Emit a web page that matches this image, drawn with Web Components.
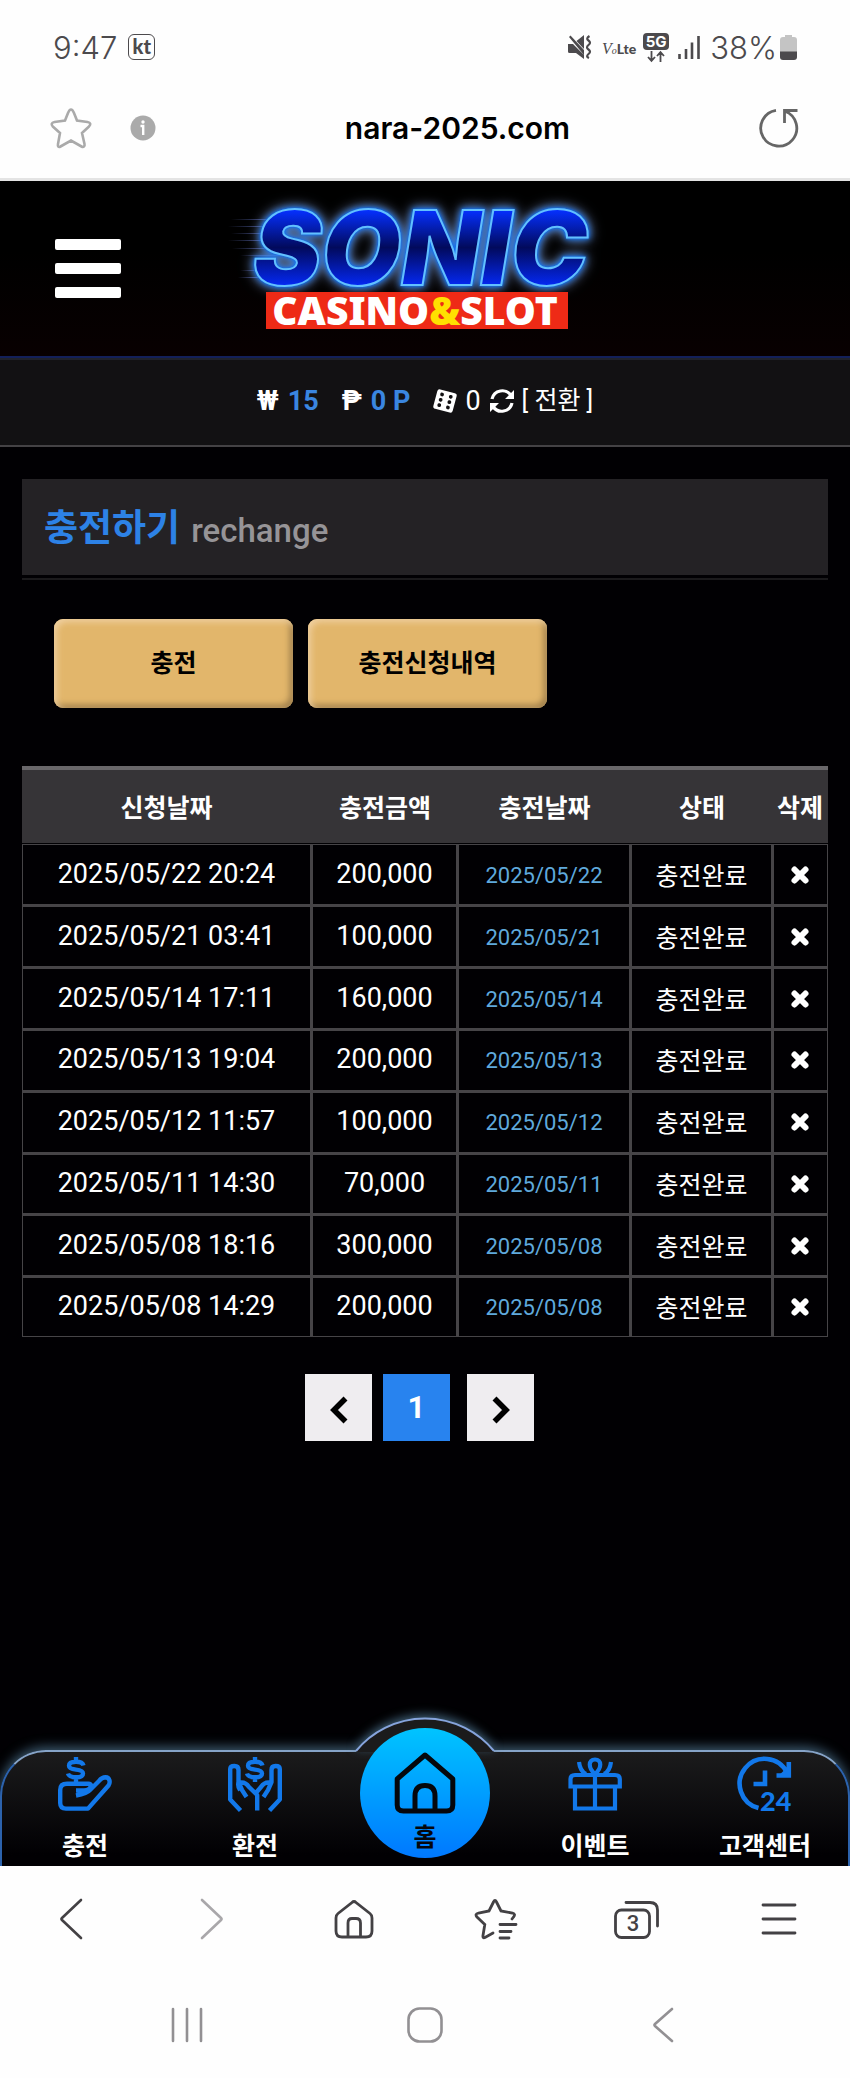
<!DOCTYPE html>
<html lang="ko">
<head>
<meta charset="utf-8">
<meta name="viewport" content="width=device-width, initial-scale=1">
<title>nara-2025.com</title>
<style>
    body {
        margin: 0;
        background: #fefefe;
        font-family: Roboto, "Noto Sans CJK KR", sans-serif;
    }
</style>
</head>
<body>
<phone-screen>
    <status-bar slot="top" time="9:47" battery="38%"></status-bar>
    <address-bar slot="top">nara-2025.com</address-bar>

    <site-header></site-header>
    <wallet-bar money="15" point="0 P" casino="0"></wallet-bar>
    <page-title sub="rechange">충전하기</page-title>
    <button-row>
        <gold-button>충전</gold-button>
        <gold-button>충전신청내역</gold-button>
    </button-row>
    <charge-table></charge-table>
    <page-nav current="1"></page-nav>

    <tab-nav slot="bottom"></tab-nav>
    <browser-toolbar slot="bottom" tabs="3"></browser-toolbar>
    <system-nav slot="bottom"></system-nav>
</phone-screen>

<script>
// ====================================================================
// ** Icons **
// ====================================================================
const ICONS = {
    star: ['0 0 42 42', `<path d="M21 2.500C22.500 2.500 23.200 4 24 6L27 13.500L37.500 15C40.500 15.500 41.200 17.500 39 19.500L32 26L34.500 37C35 39.500 33.500 40.500 31.500 39.500L21 33.500L10.500 39.500C8.500 40.500 7.500 39.500 8 37L10 26L2.800 19.500C.8 17.500 1.500 15.500 4.500 15L15 13.500L18 6C18.800 4 19.500 2.500 21 2.500Z" stroke="currentColor" stroke-width="2.600" fill="none"/>`],
    info: ['0 0 26 26', `<circle cx="13" cy="13" r="12.500" fill="currentColor"/><circle cx="13" cy="7" r="1.700" fill="#fff"/><path d="M10.500 11H13.200V20" stroke="#fff" stroke-width="2.400" fill="none"/>`],
    reload: ['0 0 40 40', `<path d="M17 2.300A18 18 0 1 0 26 3.200M38.500 2.500H25.500V15" stroke="currentColor" stroke-width="2.800" fill="none"/>`],
    mute: ['0 0 24 24', `<path d="M0 9H5L16 20V24L8 18H1.500Q0 18 0 16.500ZM8.500 6L16 0V14ZM1 2L2.500 .5L16 15V20Z" fill="currentColor"/><path d="M21.500 1Q17.500 3.500 20.500 5.500T20.500 10T20.500 14.500T20.500 19T21 23" stroke="currentColor" stroke-width="2.200" fill="none"/>`],
    arrows: ['0 0 18 11', `<path d="M4.500 0V9M1 6L4.500 9.800L8 6M13.500 11V2M10 5L13.500 1.200L17 5" stroke="currentColor" stroke-width="1.800" fill="none"/>`],
    signal: ['0 0 22 24', `<path d="M1.500 19V24M8 14V24M14 7.500V24M20.500 1V24" stroke="currentColor" stroke-width="2.600"/>`],
    battery: ['0 0 17 25', `<path d="M5 0H12V2H14Q17 2 17 5V17H0V5Q0 2 3 2H5Z" fill="#c4c4c4"/><path d="M0 16.500H17V22Q17 25 14 25H3Q0 25 0 22Z" fill="#4c4a4d"/>`],
    bars: ['0 0 66 60', `<g fill="#fff"><rect width="66" height="11" rx="2"/><rect y="24" width="66" height="11" rx="2"/><rect y="48" width="66" height="11" rx="2"/></g>`],
    dice: ['0 0 24 24', `<g transform="rotate(15 12 12)"><rect x="2" y="2" width="20" height="20" rx="2.500" fill="#fff"/><g fill="#121113"><circle cx="7.500" cy="6.500" r="1.900"/><circle cx="7.500" cy="12" r="1.900"/><circle cx="7.500" cy="17.500" r="1.900"/><circle cx="16.500" cy="6.500" r="1.900"/><circle cx="16.500" cy="12" r="1.900"/><circle cx="16.500" cy="17.500" r="1.900"/></g></g>`],
    sync: ['0 0 26 26', `<path d="M3 11A10.500 10.500 0 0 1 22 7.500M23 15A10.500 10.500 0 0 1 4 18.500" stroke="#fff" stroke-width="3.200" fill="none"/><path d="M25 2V11H16ZM1 24V15H10Z" fill="#fff"/>`],
    cross: ['0 0 18 18', `<path d="M3.500 3.500L14.500 14.500M14.500 3.500L3.500 14.500" stroke="#fff" stroke-width="6" stroke-linecap="round"/>`],
    prev: ['0 0 20 30', `<path d="M16.500 3.500L5 15L16.500 26.500" stroke="#000" stroke-width="5.600" fill="none"/>`],
    next: ['0 0 20 30', `<path d="M3.500 3.500L15 15L3.500 26.500" stroke="#000" stroke-width="5.600" fill="none"/>`],
    charge: ['0 0 54 54', `<g stroke="currentColor" stroke-width="4.400" fill="none" stroke-linejoin="round"><path d="M18 33.500H26Q32 33.500 33 28.500Q33.200 26.800 30.500 26.800H9Q2.200 26.800 2.200 33V46Q2.200 51.600 8 51.600H30L50.500 28.500C52.500 25.500 52 20.500 47.500 20.300C44.500 20.300 42.500 22 41 24L32.500 32.500Q29 36.500 18 38.500"/><path d="M25.500 8.500Q24.500 4.800 18 4.800Q11 4.800 11 8.800Q11 12 18 12.600Q25 13.200 25 16.500Q25 20.300 18 20.300Q11 20.300 10 16.500M18 0V5M18 20V26"/></g>`],
    exchange: ['0 0 54 54', `<g stroke="currentColor" stroke-width="4.400" fill="none" stroke-linejoin="round"><path d="M12.500 53.500L2.200 42.500V12Q2.200 9 6.500 9Q10.500 9 10.500 13V25L14 33L18.500 40M10.500 26Q17 24 21 30L29.200 38V53.500M12 33Q9.500 30 10.500 25M41.500 53.500L51.800 42.500V12Q51.800 9 47.500 9Q43.500 9 43.500 13V25L40 33L35.500 40M43.500 26Q37 24 33 30L27 37"/><path d="M34.500 8.500Q33.500 4.800 27 4.800Q20 4.800 20 8.800Q20 12 27 12.600Q34 13.200 34 16.500Q34 20.300 27 20.300Q20 20.300 19 16.500M27 0V5M27 20V25"/></g>`],
    home: ['0 0 62 62', `<path d="M31 3L58.800 27V53Q58.800 59 52.500 59H9.500Q3.200 59 3.200 53V27ZM21 59V44Q21 33.500 31 33.500T41 44V59" stroke="#05070c" stroke-width="5" fill="none" stroke-linejoin="round"/>`],
    gift: ['0 0 54 54', `<path d="M7 30V51.500H47V30M27 17V51.500M2.500 29.500V22Q2.500 18 7 18H47Q51.800 18 51.800 22V29.500ZM27 17C20 11 20 2.500 27 2.500S34 11 27 17ZM11 5Q12 14 18 17M43 5Q42 14 36 17" stroke="currentColor" stroke-width="4.200" fill="none"/>`],
    support: ['0 0 54 54', `<path d="M20.500 51A25 25 0 1 1 49 15.500M50.800 5V18.500H38.500M27 13.500V27H15.500" stroke="currentColor" stroke-width="4.600" fill="none"/><path d="M39 20L53 7V20Z" fill="currentColor"/><text x="22" y="54" font-family="Lato, sans-serif" font-weight="900" font-size="27" fill="currentColor">24</text>`],
    back: ['0 0 24 42', `<path d="M22 2L3 20Q2 21 3 22L22 40" stroke="currentColor" stroke-width="2.600" fill="none" stroke-linecap="round"/>`],
    forward: ['0 0 24 42', `<path d="M2 2L21 20Q22 21 21 22L2 40" stroke="currentColor" stroke-width="2.600" fill="none" stroke-linecap="round"/>`],
    house: ['0 0 40 40', `<path d="M20 2.500Q21 2.500 22 3.500L36 14.500Q38 16 38 19V32Q38 38 32 38H8Q2 38 2 32V19Q2 16 4 14.500L18 3.500Q19 2.500 20 2.500ZM14 38V24Q14 19.500 18 19.500H22Q26.500 19.500 26.500 24V38" stroke="currentColor" stroke-width="2.800" fill="none"/>`],
    bookmarks: ['0 0 44 42', `<path d="M19 35L11 39.500Q8.500 40.500 9 37.500L10.800 26.500L3 19Q.5 16 4.500 15L15 13L19.500 4Q21 1 22.500 4L27 13L38.500 15Q42 16 39.500 19L38 21" stroke="currentColor" stroke-width="2.800" fill="none" stroke-linecap="round"/><path d="M26 26.500H42M26 33.500H37M26 40H35" stroke="currentColor" stroke-width="2.800" stroke-linecap="round"/>`],
    tabs: ['0 0 46 40', `<path d="M12 3.500H36Q43.500 3.500 43.500 11V27" stroke="currentColor" stroke-width="2.800" fill="none" stroke-linecap="round"/><rect x="1.500" y="11" width="34" height="27.500" rx="6" stroke="currentColor" stroke-width="2.800" fill="none"/>`],
    menu: ['0 0 34 34', `<path d="M1 3H33M1 17H33M1 31H33" stroke="currentColor" stroke-width="2.800" stroke-linecap="round"/>`],
    recents: ['0 0 34 36', `<path d="M3 2V34M17 2V34M31 2V34" stroke="currentColor" stroke-width="2.600" stroke-linecap="round"/>`],
    circle: ['0 0 36 36', `<rect x="1.500" y="1.500" width="33" height="33" rx="11" stroke="currentColor" stroke-width="2.600" fill="none"/>`],
    sysback: ['0 0 22 36', `<path d="M20 2L3 17Q2 18 3 19L20 34" stroke="currentColor" stroke-width="2.600" fill="none" stroke-linecap="round"/>`]
};

const icon = (name) => {
    const [box, body] = ICONS[name];
    const [, , w, h] = box.split(' ');
    return `<svg viewBox="${box}" width="${w}" height="${h}" aria-hidden="true">${body}</svg>`;
};

// Shared reset for every shadow root
const BASE = `
    :host, * { box-sizing: border-box; }
    svg { display: block; flex: none; overflow: visible; }
    button { border: 0; padding: 0; background: none; color: inherit; font: inherit; cursor: pointer; }
    a { color: inherit; text-decoration: none; }
`;

class BaseElement extends HTMLElement {
    constructor() {
        super();
        this.attachShadow({ mode: 'open' });
    }

    connectedCallback() {
        this.shadowRoot.innerHTML = `<style>${BASE}${this.styles()}</style>${this.markup()}`;
    }
}

// ====================================================================
// ** Page frame **
// ====================================================================
customElements.define('phone-screen', class extends BaseElement {
    styles() {
        return `
            :host { display: flex; flex-direction: column; min-height: 100vh; }
            main { flex: 1; background: #010003; color: #fff; padding-bottom: 40px; }
        `;
    }
    markup() {
        return `<slot name="top"></slot><main><slot></slot></main><slot name="bottom"></slot>`;
    }
});

customElements.define('status-bar', class extends BaseElement {
    styles() {
        return `
            :host { display: flex; align-items: center; height: 94px; padding: 0 53px; color: #4c4a4d; }
            .time { font: 300 31px Inter, sans-serif; }
            .carrier {
                margin: 0 auto 0 11px; width: 27px; height: 26px; border: 1px solid #4c4a4d; border-radius: 6px;
                font: 900 20px/22px Lato, sans-serif; text-align: center;
            }
            .icons { display: flex; align-items: center; }
            .volte { margin: 4px 7px 0 10px; font: 900 14px Lato, sans-serif; display: flex; align-items: baseline; }
            .volte i { font: italic 16px "Liberation Serif", serif; }
            .volte small { font: italic 10px "Liberation Serif", serif; }
            .net { display: flex; flex-direction: column; align-items: center; }
            .net b { width: 26px; height: 17px; border-radius: 4px; background: #4c4a4d; color: #fff; font: 700 15px/17px Inter, sans-serif; text-align: center; }
            .net svg { margin-top: 1px; }
            .signal { margin: 0 10px 0 9px; }
            .pct { font: 300 31px Inter, sans-serif; margin-right: 3px; }
        `;
    }
    markup() {
        return `
            <span class="time">${this.getAttribute('time')}</span>
            <span class="carrier">kt</span>
            <span class="icons">
                ${icon('mute')}
                <span class="volte"><i>V</i><small>o</small>Lte</span>
                <span class="net"><b>5G</b>${icon('arrows')}</span>
                <span class="signal">${icon('signal')}</span>
                <span class="pct">${this.getAttribute('battery')}</span>
                ${icon('battery')}
            </span>
        `;
    }
});

customElements.define('address-bar', class extends BaseElement {
    styles() {
        return `
            :host {
                display: flex; justify-content: space-between; align-items: center;
                height: 87px; padding: 0 51px 16px 50px; border-bottom: 3px solid #e4e4e4;
            }
            .left { display: flex; align-items: center; gap: 38px; color: #aaa; }
            .right { color: #666; }
            .url { font: 600 30px Inter, sans-serif; color: #000; }
        `;
    }
    markup() {
        return `
            <div class="left">
                <button aria-label="Bookmark">${icon('star')}</button>
                <button aria-label="Site info">${icon('info')}</button>
            </div>
            <span class="url"><slot></slot></span>
            <button class="right" aria-label="Reload">${icon('reload')}</button>
        `;
    }
});

// ====================================================================
// ** Site header **
// ====================================================================
customElements.define('site-header', class extends BaseElement {
    styles() {
        return `
            :host {
                display: grid; grid-template-columns: 1fr auto 1fr; align-items: center;
                height: 177px; padding: 0 55px; border-bottom: 2px solid #13205a;
                background: linear-gradient(#000 40%, #080001);
            }
            button { justify-self: start; }
            .sonic { filter: drop-shadow(0 0 1px #0a6cf0) drop-shadow(0 0 3px #0a6cf0) drop-shadow(0 0 6px #7a95c8); }
        `;
    }
    markup() {
        return `
            <button aria-label="Menu">${icon('bars')}</button>
            <a href="#" aria-label="Sonic Casino">
                <svg viewBox="0 0 384 140" width="384" height="140">
                    <defs>
                        <linearGradient id="neon" x1="0" y1="0" x2="0" y2="1">
                            <stop offset=".2" stop-color="#0530ff"/>
                            <stop offset=".5" stop-color="#020a5c"/>
                            <stop offset=".8" stop-color="#0428f0"/>
                        </linearGradient>
                        <linearGradient id="speed">
                            <stop offset="0" stop-color="#7080d0" stop-opacity="0"/>
                            <stop offset="1" stop-color="#5a6cd0"/>
                        </linearGradient>
                    </defs>
                    <g fill="url(#speed)">
                        <rect x="-2" y="20" width="56" height="1"/><rect x="-5" y="27" width="56" height="1"/>
                        <rect x="-2" y="34" width="50" height="1"/><rect x="-5" y="41" width="52" height="1"/>
                        <rect x="-1" y="49" width="50" height="1"/><rect x="7" y="56" width="40" height="1"/>
                        <rect x="7" y="71" width="26" height="1"/><rect x="5" y="78" width="26" height="1"/>
                    </g>
                    <text class="sonic" x="20" y="86" font-family="Inter, sans-serif" font-weight="900" font-style="italic" font-size="103" fill="url(#neon)" stroke="#62c0ff" stroke-width="2">SONIC</text>
                    <rect x="33" y="93" width="302" height="37" fill="#ee2a16"/>
                    <text x="182" y="126" text-anchor="middle" font-family="'Noto Sans', sans-serif" font-weight="900" font-size="39" fill="#fff">CASINO<tspan fill="#ffe000">&amp;</tspan>SLOT</text>
                </svg>
            </a>
        `;
    }
});

customElements.define('wallet-bar', class extends BaseElement {
    styles() {
        return `
            :host {
                display: flex; align-items: center; justify-content: center; height: 89px; padding-bottom: 4px;
                background: #121113; border-top: 2px solid #20222c; border-bottom: 2px solid #444245;
                font-size: 27px; line-height: 32px; white-space: pre;
            }
            b { color: #3a86e0; margin: 0 23px 0 9px; }
            .sign { font-weight: 700; }
            .casino { margin: 0 8px; }
            button { margin-left: 7px; font-size: 25px; line-height: 32px; }
        `;
    }
    markup() {
        return `
            <span class="sign">₩</span><b>${this.getAttribute('money')}</b><span class="sign">₱</span><b>${this.getAttribute('point')}</b>${icon('dice')}<span class="casino">${this.getAttribute('casino')}</span>${icon('sync')}<button>[ 전환 ]</button>
        `.trim();
    }
});

customElements.define('page-title', class extends BaseElement {
    styles() {
        return `
            :host { display: block; margin: 32px 22px 0; border-bottom: 2px solid #1b1a1c; padding-bottom: 3px; }
            h1 {
                margin: 0; height: 96px; padding: 4px 22px 0; background: #242225;
                display: flex; align-items: center; gap: 11px; font-size: 37px; line-height: 48px; color: #2d82e6;
            }
            small { font-size: 33px; font-weight: 500; color: #969497; padding-top: 4px; }
        `;
    }
    markup() {
        return `<h1><slot></slot><small>${this.getAttribute('sub')}</small></h1>`;
    }
});

customElements.define('button-row', class extends BaseElement {
    styles() {
        return `:host { display: flex; gap: 15px; margin: 39px 54px 58px; }`;
    }
    markup() {
        return `<slot></slot>`;
    }
});

customElements.define('gold-button', class extends BaseElement {
    styles() {
        return `
            :host { display: block; flex: 0 1 239px; }
            button {
                width: 100%; height: 89px; padding-bottom: 6px; border-radius: 9px; background: #e2b66b; color: #000;
                font-size: 25px; font-weight: 700;
                box-shadow: inset 3px 3px 6px #f0d0a0, inset -3px -3px 6px #9a7a48;
            }
        `;
    }
    markup() {
        return `<button><slot></slot></button>`;
    }
});

// ====================================================================
// ** Charge history **
// ====================================================================
const CHARGES = [
    ['2025/05/22 20:24', '200,000'],
    ['2025/05/21 03:41', '100,000'],
    ['2025/05/14 17:11', '160,000'],
    ['2025/05/13 19:04', '200,000'],
    ['2025/05/12 11:57', '100,000'],
    ['2025/05/11 14:30', '70,000'],
    ['2025/05/08 18:16', '300,000'],
    ['2025/05/08 14:29', '200,000']
];

customElements.define('charge-table', class extends BaseElement {
    styles() {
        return `
            :host { display: block; margin: 0 22px; }
            table { width: 100%; height: 571px; table-layout: fixed; border-spacing: 0; }
            th { height: 78px; padding: 0 2px 2px 0; border-top: 4px solid #69676a; border-bottom: 1px solid #010003; background: #363437; font-size: 25px; white-space: nowrap; }
            td {
                padding: 0 0 2px; text-align: center; font-size: 27px; white-space: nowrap;
                border: solid #464447; border-width: 0 3px 3px 0;
            }
            td:first-child { border-left-width: 1px; }
            td:last-child { border-right-width: 1px; padding-right: 2px; }
            tr:first-child td { border-top-width: 1px; }
            tr:last-child td { border-bottom-width: 1px; }
            td.date { font-size: 22px; color: #5fa9dc; padding: 1px 0 0; }
            td.state { font-size: 25px; }
            button { display: block; margin: 0 auto; padding-top: 2px; }
        `;
    }
    markup() {
        const rows = CHARGES.map(([when, amount]) => `
            <tr>
                <td>${when}</td>
                <td>${amount}</td>
                <td class="date">${when.split(' ')[0]}</td>
                <td class="state">충전완료</td>
                <td><button aria-label="삭제">${icon('cross')}</button></td>
            </tr>
        `).join('');
        return `
            <table>
                <colgroup>
                    <col style="width: 291px"><col style="width: 146px"><col style="width: 173px"><col style="width: 142px"><col style="width: 54px">
                </colgroup>
                <thead>
                    <tr><th>신청날짜</th><th>충전금액</th><th>충전날짜</th><th>상태</th><th>삭제</th></tr>
                </thead>
                <tbody>${rows}</tbody>
            </table>
        `;
    }
});

customElements.define('page-nav', class extends BaseElement {
    styles() {
        return `
            nav { display: flex; justify-content: center; gap: 11px; margin-top: 37px; padding-right: 11px; }
            button { width: 67px; height: 67px; display: grid; place-items: center; background: #efedf0; padding-top: 4px; }
            .on { background: #2883ef; color: #fff; font-size: 31px; font-weight: 700; padding: 0; margin-right: 6px; }
        `;
    }
    markup() {
        return `
            <nav>
                <button aria-label="이전">${icon('prev')}</button>
                <button class="on">${this.getAttribute('current')}</button>
                <button aria-label="다음">${icon('next')}</button>
            </nav>
        `;
    }
});

// ====================================================================
// ** Bottom bars **
// ====================================================================
customElements.define('tab-nav', class extends BaseElement {
    styles() {
        return `
            :host { display: block; background: #010003; color: #fff; }
            nav { position: relative; display: grid; grid-template-columns: repeat(5, 1fr); height: 149px; padding-top: 33px; }
            /* the bar and its dome lie behind the links */
            .bar {
                position: absolute; inset: 33px 0 0; border: 2px solid #2c62ac; border-width: 2px 2px 0; border-top-color: #86a4c8;
                border-radius: 46px 46px 0 0; background: linear-gradient(#1b1b1c, #010003 90%);
                box-shadow: 0 -3px 12px #3c5a70;
                clip-path: inset(-30px 0 0);
            }
            .dome { position: absolute; left: 50%; top: 0; margin-left: -69px; filter: drop-shadow(0 -3px 5px #3c5a70); }
            a {
                position: relative; display: flex; flex-direction: column; align-items: center; gap: 18px;
                padding-top: 7px; color: #1278ea; font-size: 25px; font-weight: 700; line-height: 36px;
            }
            a span { color: #fff; }
            .home {
                justify-self: center; width: 130px; height: 130px; margin-top: -22px; padding-top: 24px; gap: 6px;
                border-radius: 50%; background: linear-gradient(#00c4ff, #0078ff);
            }
            .home span { color: #05070c; }
        `;
    }
    markup() {
        return `
            <nav>
                <div class="bar"></div>
                <svg class="dome" viewBox="0 0 138 35" width="138" height="35">
                    <path d="M0 35V34A89.500 89.500 0 0 1 138 34V35Z" fill="#1b1b1c"/>
                    <path d="M0 34A89.500 89.500 0 0 1 138 34" fill="none" stroke="#86a4dc" stroke-width="2"/>
                </svg>
                <a href="#">${icon('charge')}<span>충전</span></a>
                <a href="#">${icon('exchange')}<span>환전</span></a>
                <a href="#" class="home">${icon('home')}<span>홈</span></a>
                <a href="#">${icon('gift')}<span>이벤트</span></a>
                <a href="#">${icon('support')}<span>고객센터</span></a>
            </nav>
        `;
    }
});

customElements.define('browser-toolbar', class extends BaseElement {
    styles() {
        return `
            :host { display: grid; grid-template-columns: repeat(6, 1fr); height: 106px; color: #434144; }
            button { display: grid; place-items: center; }
            .off { color: #a9a7aa; }
            .tabs > * { grid-area: 1 / 1; }
            .tabs span { font: 500 22px/28px Roboto, sans-serif; padding: 10px 9px 0 0; }
        `;
    }
    markup() {
        return `
            <button aria-label="Back">${icon('back')}</button>
            <button class="off" aria-label="Forward">${icon('forward')}</button>
            <button aria-label="Home">${icon('house')}</button>
            <button aria-label="Bookmarks">${icon('bookmarks')}</button>
            <button class="tabs" aria-label="Tabs">${icon('tabs')}<span>${this.getAttribute('tabs')}</span></button>
            <button aria-label="Menu">${icon('menu')}</button>
        `;
    }
});

customElements.define('system-nav', class extends BaseElement {
    styles() {
        return `
            :host { display: grid; grid-template-columns: repeat(3, 1fr); height: 106px; padding: 0 8%; color: #929093; }
            button { display: grid; place-items: center; }
        `;
    }
    markup() {
        return ['recents', 'circle', 'sysback'].map(name => `<button aria-label="${name}">${icon(name)}</button>`).join('');
    }
});
</script>
</body>
</html>
